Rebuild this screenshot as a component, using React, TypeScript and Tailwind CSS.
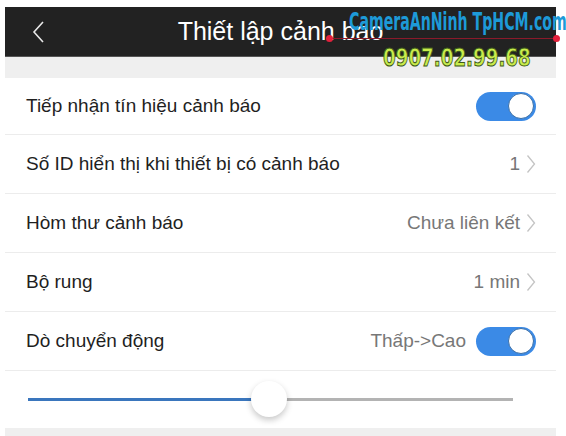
import React from "react";

type Row = {
	label: string;
	value?: string;
	toggle?: boolean;
	chevron?: boolean;
};

const rows: Row[] = [
	{ label: "Tiếp nhận tín hiệu cảnh báo", toggle: true },
	{ label: "Số ID hiển thị khi thiết bị có cảnh báo", value: "1", chevron: true },
	{ label: "Hòm thư cảnh báo", value: "Chưa liên kết", chevron: true },
	{ label: "Bộ rung", value: "1 min", chevron: true },
	{ label: "Dò chuyển động", value: "Thấp->Cao", toggle: true },
];

const Toggle = () => (
	<div className="w-[60px] h-[29px] rounded-full bg-[#3b8ae6] flex items-center justify-end pr-[2px]">
		<div className="w-[26px] h-[26px] rounded-full bg-white border border-[#3a6fa8]" />
	</div>
);

const Chevron = () => (
	<svg width="10" height="20" viewBox="0 0 10 20" className="ml-[4px]">
		<polyline
			points="1.5,1.5 8.5,10 1.5,18.5"
			fill="none"
			stroke="#c4c4c4"
			strokeWidth="1.3"
		/>
	</svg>
);

export default function App() {
	return (
		<div
			className="relative w-[566px] h-[436px] bg-white overflow-hidden"
			style={{ fontFamily: '"Liberation Sans", Arial, sans-serif' }}
		>
			<div className="mx-[5px] w-[551px] pt-[7px]">
				{/* header */}
				<div className="h-[50px] bg-[#222222] border-b border-[#555] flex items-center relative">
					<svg width="14" height="24" viewBox="0 0 14 24" className="ml-[26px]">
						<polyline
							points="12,2 3,12 12,22"
							fill="none"
							stroke="#e8e8e8"
							strokeWidth="1.6"
						/>
					</svg>
					<div className="absolute inset-0 flex items-center justify-center text-white text-[25px]">
						Thiết lập cảnh báo
					</div>
				</div>
				<div className="h-[21px] bg-[#efefef]" />

				{rows.map((r, i) => (
					<div
						key={i}
						className={`${i === 0 ? "h-[57px]" : "h-[59px]"} flex items-center justify-between pl-[21px] pr-[20px] border-b border-[#ececec]`}
					>
						<span className="text-[19px] text-[#1f1f1f]">{r.label}</span>
						<div className="flex items-center">
							{r.value && (
								<span className="text-[19px] text-[#777777] mr-[2px]">
									{r.value}
								</span>
							)}
							{r.chevron && <Chevron />}
							{r.toggle && (
								<div className={r.value ? "ml-[8px]" : ""}>
									<Toggle />
								</div>
							)}
						</div>
					</div>
				))}

				{/* slider */}
				<div className="h-[57px] flex items-center pl-[23px] pr-[43px]">
					<div className="relative flex-1 h-[3px] flex">
						<div className="w-[241px] h-[3px] bg-[#3a76bd]" />
						<div className="flex-1 h-[3px] bg-[#b3b3b3]" />
						<div className="absolute left-[223px] top-[-17px] w-[36px] h-[36px] rounded-full bg-white shadow-[0_3px_6px_rgba(0,0,0,0.22)]" />
					</div>
				</div>
				<div className="h-[8px] bg-[#efefef]" />
			</div>

			{/* watermark */}
			<div
				className="absolute left-[349px] top-[4px] whitespace-nowrap text-[#1d9ad8] text-[24px] font-bold origin-left scale-x-[0.655]"
				style={{ fontFamily: '"DejaVu Sans Condensed", "DejaVu Sans", sans-serif' }}
			>
				CameraAnNinh TpHCM.com
			</div>
			<div className="absolute left-[329px] top-[38px] w-[227px] h-[1px] bg-[#8a1a2a]" />
			<div className="absolute left-[326px] top-[35px] w-[7px] h-[7px] rounded-full bg-[#e3213c]" />
			<div className="absolute left-[553px] top-[35px] w-[7px] h-[7px] rounded-full bg-[#e3213c]" />
			<div
				className="absolute left-[383px] top-[40px] whitespace-nowrap text-[24px] font-bold text-[#c9ec4c] origin-left scale-x-[0.76]"
				style={{
					fontFamily: '"DejaVu Sans", sans-serif',
					WebkitTextStroke: "1px #3c5a18",
				}}
			>
				0907.02.99.68
			</div>
		</div>
	);
}
